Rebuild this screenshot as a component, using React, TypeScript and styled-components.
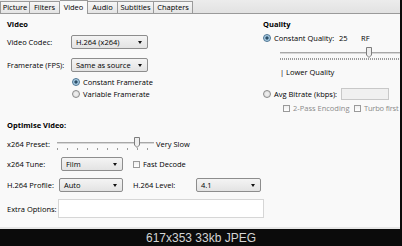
import React from "react";
import styled, { createGlobalStyle, css } from "styled-components";

const Global = createGlobalStyle`
  html, body { margin: 0; padding: 0; background: #0b0b0b; }
  body { width: 402px; height: 246px; overflow: hidden; }
`;

const Frame = styled.div`
  width: 402px;
  height: 246px;
  display: flex;
  flex-direction: column;
  background: #0b0b0b;
`;

const Shot = styled.div`
  width: 400px;
  height: 227px;
  background: #f9f9f9;
  border-bottom: 2px solid #e6e6e6;
  overflow: hidden;
  display: flex;
  flex-direction: column;
  font-family: "Open Sans", "Noto Sans", sans-serif;
  font-size: 7.5px;
  font-weight: 500;
  color: #000;
`;

const TabBar = styled.div`
  height: 13px;
  display: flex;
  align-items: flex-end;
  background: linear-gradient(#ececec, #e2e2e2);
  border-bottom: 1px solid #9a9a9a;
  flex-shrink: 0;
`;

const Tab = styled.div<{ $active?: boolean; $w: number }>`
  width: ${(p) => p.$w}px;
  height: 12px;
  box-sizing: border-box;
  display: flex;
  align-items: center;
  justify-content: center;
  border: 1px solid #9a9a9a;
  border-left-width: 0;
  border-bottom: none;
  background: linear-gradient(#f6f6f6, #e4e4e4);
  line-height: 1;
  ${(p) =>
    p.$active &&
    css`
      height: 14px;
      margin-bottom: -1px;
      background: #f9f9f9;
    `}
  &:first-child { border-left-width: 1px; }
`;

const Body = styled.div`
  display: grid;
  grid-template-columns: 263px 1fr;
  flex: 1;
`;

const Column = styled.div<{ $pl: number }>`
  display: flex;
  flex-direction: column;
  padding-left: ${(p) => p.$pl}px;
  padding-top: 5px;
  white-space: nowrap;
`;

const Heading = styled.div<{ $mt?: number }>`
  font-weight: 700;
  height: 10px;
  line-height: 10px;
  margin-top: ${(p) => p.$mt ?? 0}px;
`;

const Row = styled.div<{ $mt: number; $h: number; $ml?: number }>`
  display: flex;
  align-items: center;
  height: ${(p) => p.$h}px;
  margin-top: ${(p) => p.$mt}px;
  margin-left: ${(p) => p.$ml ?? 0}px;
`;

const Label = styled.span<{ $w?: number; $muted?: boolean; $ml?: number; $tight?: boolean }>`
  display: inline-block;
  ${(p) => p.$w !== undefined && css`width: ${p.$w}px;`}
  margin-left: ${(p) => p.$ml ?? 0}px;
  flex-shrink: 0;
  color: ${(p) => (p.$muted ? "#8a8a8a" : "#000")};
  letter-spacing: ${(p) => (p.$tight ? "-0.2px" : "normal")};
`;

const SelectBox = styled.div<{ $w: number }>`
  width: ${(p) => p.$w}px;
  height: 14px;
  box-sizing: border-box;
  border: 1px solid #8d8d8d;
  border-radius: 2px;
  background: linear-gradient(#f4f4f4, #e3e3e3);
  display: flex;
  align-items: center;
  justify-content: space-between;
  padding: 0 5px 0 4px;
  flex-shrink: 0;
`;

const Arrow = styled.span`
  width: 0;
  height: 0;
  border-left: 2.5px solid transparent;
  border-right: 2.5px solid transparent;
  border-top: 3px solid #111;
`;

const Select = ({ w, value }: { w: number; value: string }) => (
  <SelectBox $w={w}>
    <span>{value}</span>
    <Arrow />
  </SelectBox>
);

const RadioDot = styled.span<{ $on?: boolean }>`
  width: 8px;
  height: 8px;
  box-sizing: border-box;
  border-radius: 50%;
  border: 1px solid #8a8a8a;
  background: radial-gradient(circle, #f2f2f2 0, #d9d9d9 100%);
  margin-right: 3px;
  flex-shrink: 0;
  ${(p) =>
    p.$on &&
    css`
      border-color: #4a7391;
      background: radial-gradient(circle, #2c4e66 0, #2c4e66 30%, #9cc3de 45%, #cfe3f0 100%);
    `}
`;

const Check = styled.span<{ $ml?: number }>`
  width: 7px;
  height: 7px;
  box-sizing: border-box;
  border: 1px solid #9a9a9a;
  background: linear-gradient(#f0f0f0, #ffffff);
  margin-left: ${(p) => p.$ml ?? 0}px;
  margin-right: 3px;
  flex-shrink: 0;
`;

const TextBox = styled.div<{ $w: number; $h: number; $disabled?: boolean }>`
  width: ${(p) => p.$w}px;
  height: ${(p) => p.$h}px;
  box-sizing: border-box;
  border: 1px solid ${(p) => (p.$disabled ? "#c8c8c8" : "#d6d6d6")};
  background: ${(p) => (p.$disabled ? "#f0f0f0" : "#ffffff")};
  flex-shrink: 0;
`;

const Slider = styled.div<{ $w: number }>`
  position: relative;
  width: ${(p) => p.$w}px;
  height: 16px;
  flex-shrink: 0;
`;

const Track = styled.div`
  position: absolute;
  left: 0;
  right: 0;
  top: 6px;
  height: 2px;
  background: #d7d7d7;
  border-top: 1px solid #a8a8a8;
  box-sizing: border-box;
`;

const Ticks = styled.div<{ $step: number }>`
  position: absolute;
  left: 0;
  right: 0;
  top: 12px;
  height: 2px;
  background-image: linear-gradient(to right, #9a9a9a 1px, transparent 1px);
  background-size: ${(p) => p.$step}px 2px;
  background-repeat: repeat-x;
`;

const Thumb = styled.div`
  position: absolute;
  top: 1px;
  width: 6px;
  height: 11px;
  transform: translateX(-3px);
`;

const ThumbIcon = () => (
  <svg width="6" height="11" viewBox="0 0 6 11">
    <path d="M0.5 0.5 H5.5 V8 L3 10.5 L0.5 8 Z" fill="#eeeeee" stroke="#7d7d7d" strokeWidth="1" />
  </svg>
);

const Caption = styled.div`
  flex: 1;
  display: flex;
  align-items: center;
  justify-content: center;
  color: #d4d4d4;
  font-family: "Liberation Sans", Arial, sans-serif;
  font-size: 12px;
`;

const SliderBar = ({ w, step, at }: { w: number; step: number; at: number }) => (
  <Slider $w={w}>
    <Track />
    <Ticks $step={step} />
    <Thumb style={{ left: at }}>
      <ThumbIcon />
    </Thumb>
  </Slider>
);

export default function App() {
  return (
    <>
      <Global />
      <Frame>
        <Shot>
          <TabBar>
            <Tab $w={30}>Picture</Tab>
            <Tab $w={30}>Filters</Tab>
            <Tab $w={28} $active>Video</Tab>
            <Tab $w={30}>Audio</Tab>
            <Tab $w={36}>Subtitles</Tab>
            <Tab $w={39}>Chapters</Tab>
          </TabBar>
          <Body>
            <Column $pl={7}>
              <Heading>Video</Heading>
              <Row $mt={6} $h={14}>
                <Label $w={64}>Video Codec:</Label>
                <Select w={77} value="H.264 (x264)" />
              </Row>
              <Row $mt={9} $h={14}>
                <Label $w={64}>Framerate (FPS):</Label>
                <Select w={77} value="Same as source" />
              </Row>
              <Row $mt={5} $h={10} $ml={65}>
                <RadioDot $on />
                <Label>Constant Framerate</Label>
              </Row>
              <Row $mt={2} $h={10} $ml={65}>
                <RadioDot />
                <Label>Variable Framerate</Label>
              </Row>
              <Heading $mt={21}>Optimise Video:</Heading>
              <Row $mt={7} $h={14}>
                <Label $w={50}>x264 Preset:</Label>
                <SliderBar w={97} step={10} at={80} />
                <Label $ml={2}>Very Slow</Label>
              </Row>
              <Row $mt={6} $h={14}>
                <Label $w={54}>x264 Tune:</Label>
                <Select w={62} value="Film" />
                <Check $ml={10} />
                <Label>Fast Decode</Label>
              </Row>
              <Row $mt={7} $h={14}>
                <Label $w={52}>H.264 Profile:</Label>
                <Select w={64} value="Auto" />
                <Label $w={63} $ml={10}>H.264 Level:</Label>
                <Select w={65} value="4.1" />
              </Row>
              <Row $mt={7} $h={19}>
                <Label $w={51}>Extra Options:</Label>
                <TextBox $w={206} $h={19} />
              </Row>
            </Column>
            <Column $pl={0}>
              <Heading>Quality</Heading>
              <Row $mt={4} $h={10}>
                <RadioDot $on />
                <Label $w={65}>Constant Quality:</Label>
                <Label $w={22}>25</Label>
                <Label>RF</Label>
              </Row>
              <Row $mt={3} $h={16} $ml={17}>
                <SliderBar w={130} step={2} at={89} />
              </Row>
              <Row $mt={5} $h={10} $ml={17}>
                <Label>| Lower Quality</Label>
              </Row>
              <Row $mt={11} $h={12}>
                <RadioDot />
                <Label $w={67}>Avg Bitrate (kbps):</Label>
                <TextBox $w={48} $h={12} $disabled />
              </Row>
              <Row $mt={3} $h={10} $ml={20}>
                <Check />
                <Label $w={61} $muted>2-Pass Encoding</Label>
                <Check />
                <Label $muted $tight>Turbo first</Label>
              </Row>
            </Column>
          </Body>
        </Shot>
        <Caption>617x353 33kb JPEG</Caption>
      </Frame>
    </>
  );
}
